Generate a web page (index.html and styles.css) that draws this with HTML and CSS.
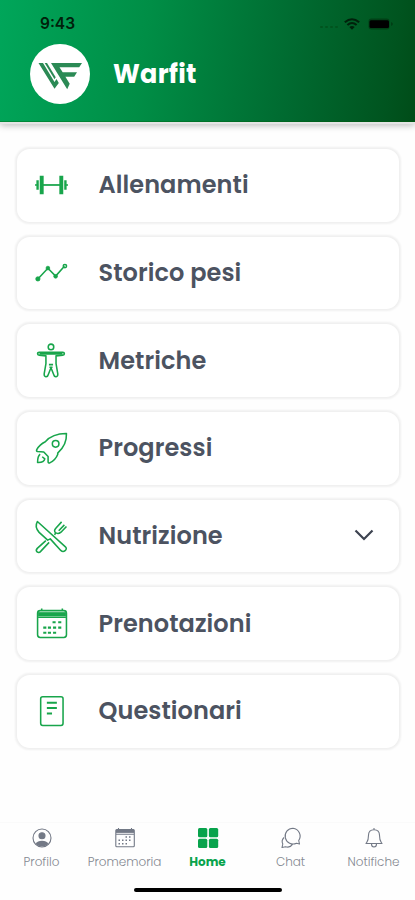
FILE: index.html
```html
<!DOCTYPE html>
<html lang="it">
<head>
<meta charset="utf-8">
<meta name="viewport" content="width=device-width, initial-scale=1">
<title>Warfit</title>
<link rel="stylesheet" href="styles.css">
</head>
<body>
<div class="app">
  <header class="header">
    <div class="status">
      <span class="time">9:43</span>
      <div class="signals">
        <span class="dots"><i></i><i></i><i></i><i></i></span>
        <svg class="wifi" viewBox="0 0 16 12"><path d="M.8 4.300Q8-1.800 15.200 4.300M3.400 7Q8 3 12.600 7" fill="none" stroke="currentColor" stroke-width="2.100"/><path d="M5.300 9Q8 6.800 10.700 9L8 11.800z" fill="currentColor"/></svg>
        <svg class="battery" viewBox="0 0 26 12"><rect x=".5" y=".5" width="21" height="11" rx="3" fill="#002c0c" opacity=".55"/><rect x="1.500" y="2.200" width="19.500" height="7.800" rx="1.500" fill="#000"/><path d="M23.500 4q2 2 0 4z" fill="#00280b"/></svg>
      </div>
    </div>
    <div class="brand">
      <div class="logo"><svg viewBox="0 0 60 60"><g fill="#2b8a55"><path d="M8.500 19h4.500l11.500 19 2-3 2.300 4-4.300 5.800z"/><path d="M14.700 19h2.300l8.700 14.300-1.200 1.900z"/><path d="M21 19h31l-2.800 4.300H29.500l3.200 5H47l-2.800 4.500H35.400l4.300 7-2.500 5.500z"/></g></svg></div>
      <h1>Warfit</h1>
    </div>
  </header>
  <main class="menu">
    <a class="card"><svg class="icon" viewBox="0 0 32 32"><path d="M7 15.500h18" stroke-width="1.700"/><path d="M6.500 6.500v18M25.500 6.500v18" stroke-width="3.800"/><path d="M2.500 11v9M29.500 11v9" stroke-width="2.300"/><path d="M0 15.500h3M29 15.500h3"/></svg><span class="label">Allenamenti</span></a>
    <a class="card"><svg class="icon" viewBox="0 0 32 32"><path d="M3 22l9.500-10.200L20 19.500 28.500 10"/><g fill="#18a54b" stroke-width=".7"><circle cx="2.800" cy="22.200" r="2.100"/><circle cx="12.500" cy="11.700" r="1.800"/><circle cx="20" cy="19.700" r="1.800"/></g><circle cx="29" cy="9.800" r="1.600"/></svg><span class="label">Storico pesi</span></a>
    <a class="card"><svg class="icon" viewBox="0 0 32 32"><circle cx="15.500" cy="2.800" r="2.700"/><path d="M4 8.100h23q1.500 0 1.500 1.300T27 10.800l-6.600.7V19l1.700 10q.2 2.500-1.600 2.700-1.800.2-2.300-1.900L15.500 23l-2.700 6.800q-.5 2.100-2.300 1.900-1.800-.2-1.600-2.700l1.700-10v-7.500L4 10.800Q2.500 10.700 2.500 9.400T4 8.100z"/><path d="M4.500 9.600h22M13.500 20h4M14 22.500h3" stroke-width="1.600"/></svg><span class="label">Metriche</span></a>
    <a class="card"><svg class="icon" viewBox="0 0 32 32"><path d="M10 9.500Q17 1.400 30.500 1.500 31 12.500 22 20.500l.1 1Q20 27 14.300 30q-1.400.4-1.600-1v-5.300l-4.200-4.300-6-.5q-1.500-.4-.8-1.700Q4.500 12 10 9.500z"/><circle cx="20" cy="11.500" r="3.200"/><path d="M5 21.500q-2.500 2-2.500 8 6.300.2 7-3.500l-2.500-2"/></svg><span class="label">Progressi</span></a>
    <a class="card"><svg class="icon" viewBox="0 0 32 32"><path d="M2.300 1.500q-3 5 1.700 10.500l8.300 7.500 2.500-1.200L25 29.500q2.100 2 4.200.2t.3-3.700z"/><path d="M10.500 20l-8.300 7.500q-1.800 2-.2 3.500 2 1.300 3.700-.8l8-8.500M19 14.500l1-2q-2.200-2 .4-4.800l5.400-5.900M23 10.500l5.500-5.800M30.500 6.300l-5.300 5.500q-2.800 2.300-4.600.6"/></svg><span class="label">Nutrizione</span><svg class="chevron" viewBox="0 0 20 12"><path d="M1.500 1.500L10 10l8.500-8.500"/></svg></a>
    <a class="card"><svg class="icon" viewBox="0 0 32 32"><rect x="2.500" y="3.500" width="28" height="26" rx="2.500"/><path d="M3 7h27" stroke-width="4"/><path d="M6.500 3V1.500M26.500 3V1.500M3 10h27"/><path d="M17 14.800h3M22.500 14.800h3M8 20h3M12.500 20h3M17.500 20h3M22.500 20h3M8 25h3M12.500 25h3M17.500 25h3" stroke-width="2"/></svg><span class="label">Prenotazioni</span></a>
    <a class="card"><svg class="icon" viewBox="0 0 32 32"><rect x="5.500" y="1.700" width="21.700" height="27.800" rx="2"/><path d="M11.500 7.500h9.700M11.500 12.700h9.700M11.500 18h5" stroke-width="1.900"/></svg><span class="label">Questionari</span></a>
  </main>
  <nav class="tabs">
    <a class="tab"><svg viewBox="0 0 22 22"><circle cx="11" cy="11" r="9"/><circle cx="11" cy="8.700" r="3" fill="currentColor"/><path d="M4.500 17q2-3.200 6.500-3.200t6.500 3.200Q11 22 4.500 17z" fill="currentColor" stroke="none"/></svg><span>Profilo</span></a>
    <a class="tab"><svg viewBox="0 0 22 22"><rect x="1.800" y="2.500" width="18.500" height="17.300" rx="1"/><path d="M2 4.300h18" stroke-width="3.200"/><path d="M2 7.300h18M4.500 3V1M17.500 3V1"/><path d="M11.500 10h1.500M15 10h1.500M4.500 13.300h1.500M8 13.300h1.500M11.500 13.300h1.500M15 13.300h1.500M4.500 16.700h1.500M8 16.700h1.500M11.500 16.700h1.500" stroke-width="1.500"/></svg><span>Promemoria</span></a>
    <a class="tab active"><svg viewBox="0 0 22 22"><g fill="currentColor" stroke="none"><rect x="1" y="1" width="9.300" height="9.300" rx="1.500"/><rect x="11.900" y="1" width="9.300" height="9.300" rx="1.500"/><rect x="1" y="11.800" width="9.300" height="9.300" rx="1.500"/><rect x="11.900" y="11.800" width="9.300" height="9.300" rx="1.500"/></g></svg><span>Home</span></a>
    <a class="tab"><svg viewBox="0 0 22 22"><path d="M13 1.200a7.900 7.900 0 1 0 3.500 15l3 .8-.8-3.500A7.900 7.900 0 0 0 13 1.200zM4 10.500q-3 3-1.200 6.500L2 20.500l3.500-.8q4.500 1.500 7-2.300"/></svg><span>Chat</span></a>
    <a class="tab"><svg viewBox="0 0 22 22"><path d="M11 1v1.700M5.500 8.200q0-5.500 5.500-5.500t5.500 5.500c0 5.800 1 6 2.500 8.300H3c1.500-2.300 2.500-2.500 2.500-8.300zM8.500 17q0 3 2.500 3t2.500-3"/></svg><span>Notifiche</span></a>
  </nav>
  <div class="home-bar"></div>
</div>
</body>
</html>
```
FILE: styles.css
```css
* { box-sizing: border-box; }
body { margin: 0; background: #fefefe; font-family: Poppins, Inter, sans-serif; }
.app { width: 415px; height: 900px; display: flex; flex-direction: column; overflow: hidden; }
.header {
  height: 122px; flex: none; padding: 14px 21px 0 30px;
  background: linear-gradient(98deg, #00a65a 0%, #008e46 35%, #006a30 70%, #00541f 93%, #004c18 100%);
  border-bottom: 1px solid rgba(0, 90, 0, .35);
  box-shadow: 0 2px 1px #e4e4e4, 0 3px 7px rgba(0, 0, 0, .3);
}
.status { height: 19px; display: flex; justify-content: space-between; align-items: center; color: #00210b; }
.time { font-family: Inter, sans-serif; font-size: 15.500px; font-weight: 600; padding-left: 10px; }
.signals { display: flex; align-items: center; }
.dots { display: flex; gap: 2px; padding-top: 7px; margin-right: 6px; }
.dots i { width: 3px; height: 2px; border-radius: 1px; background: #00531e; }
.wifi { width: 16px; height: 12px; margin-right: 8px; }
.battery { width: 26px; height: 12px; }
.brand { display: flex; align-items: center; gap: 23px; margin-top: 11px; }
.logo { width: 60px; height: 60px; border-radius: 50%; background: #fff; }
.logo svg { display: block; width: 60px; height: 60px; }
h1 { margin: 0; color: #fff; font-size: 25.500px; line-height: 30px; font-weight: 700; letter-spacing: .25px; }
.menu { padding: 27px 16px 0 17px; display: flex; flex-direction: column; gap: 15.200px; }
.card {
  height: 72.500px; flex: none; display: flex; align-items: center; padding: 0 25px 0 18px;
  border-radius: 13px; background: #fff; box-shadow: 0 0 2px 1.500px #f0f0f0;
}
.icon { width: 33px; height: 33px; margin-right: 30.500px; overflow: visible; fill: none; stroke: #18a54b; stroke-width: 1.500; stroke-linejoin: round; }
.label { color: #4c5361; font-size: 24px; line-height: 30px; font-weight: 600; letter-spacing: .08px; white-space: nowrap; }
.chevron { width: 20px; height: 12px; margin: -2px 0 0 auto; fill: none; stroke: #3d4350; stroke-width: 2.200; }
.tabs { flex: none; height: 62px; margin-top: auto; border-top: 1px solid #fafafa; display: grid; grid-template-columns: repeat(5, 83px); padding-top: 4px; }
.tab { display: flex; flex-direction: column; align-items: center; gap: 5px; color: #737986; font-size: 12px; line-height: 16px; font-weight: 300; white-space: nowrap; }
.tab svg { width: 22px; height: 22px; fill: none; stroke: currentColor; stroke-width: 1.100; stroke-linejoin: round; }
.tab span { color: #858991; }
.tab.active, .tab.active span { color: #08a34c; font-weight: 700; }
.home-bar { flex: none; width: 148px; height: 4px; border-radius: 2px; background: #000; margin: 4px 0 8px 134px; }
```
